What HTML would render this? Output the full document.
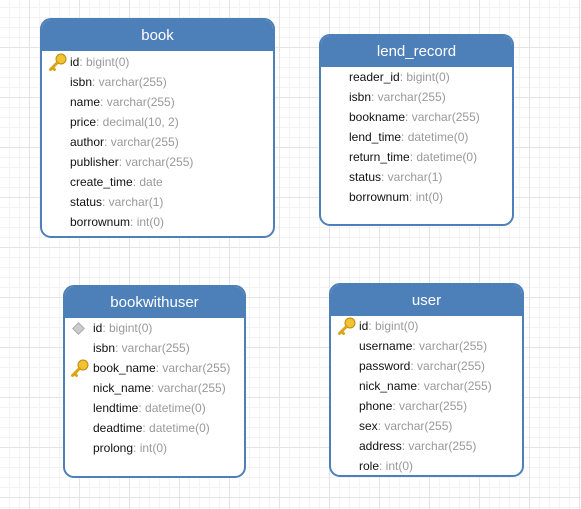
<!DOCTYPE html>
<html><head><style>
body{margin:0;width:581px;height:509px;overflow:hidden;background-color:#fff;
background-image:linear-gradient(#e4e4e4 1px,transparent 1px),linear-gradient(90deg,#e4e4e4 1px,transparent 1px),linear-gradient(#f3f3f3 1px,transparent 1px),linear-gradient(90deg,#f3f3f3 1px,transparent 1px);
background-size:50px 50px,50px 50px,10px 10px,10px 10px;background-position:0 -3px,-21px 0,0 -3px,-1px 0;
font-family:"Liberation Sans","Noto Sans CJK SC",sans-serif;position:relative}
.t{position:absolute;border:2px solid #4d7fb8;border-radius:11px;background:#fff;box-sizing:border-box;overflow:hidden}
.h{background:#4d80b9;color:#fff;font-size:15px;text-align:center;line-height:32px;height:31px}
.r{position:relative;height:20px;line-height:20px;font-size:12px;color:#111;white-space:nowrap}
.r span{color:#999}
.k{position:absolute;top:1px}
.d{position:absolute;top:6px;width:7px;height:7px;background:#ccc;border:1px solid #aaa;transform:rotate(45deg)}
</style></head><body>
<svg width="0" height="0" style="position:absolute"><defs><g id="key"><circle cx="13" cy="6" r="5" fill="#f2c230" stroke="#b98a10" stroke-width="1"/><path d="M9.5 9.5 L2.5 16.5 M4.5 14.5 L6.5 16.5" stroke="#d9a516" stroke-width="3" fill="none" stroke-linecap="round"/></g></defs></svg>
<div class="t" style="left:40px;top:18px;width:235px;height:220px">
<div class="h">book</div>
<div style="padding-left:28px;padding-top:1px">
<div class="r"><svg class="k" style="left:-22px" width="19" height="19"><use href="#key"/></svg>id<span>: bigint(0)</span></div>
<div class="r">isbn<span>: varchar(255)</span></div>
<div class="r">name<span>: varchar(255)</span></div>
<div class="r">price<span>: decimal(10, 2)</span></div>
<div class="r">author<span>: varchar(255)</span></div>
<div class="r">publisher<span>: varchar(255)</span></div>
<div class="r">create_time<span>: date</span></div>
<div class="r">status<span>: varchar(1)</span></div>
<div class="r">borrownum<span>: int(0)</span></div>
</div></div>
<div class="t" style="left:319px;top:34px;width:195px;height:192px">
<div class="h">lend_record</div>
<div style="padding-left:28px;padding-top:0px">
<div class="r">reader_id<span>: bigint(0)</span></div>
<div class="r">isbn<span>: varchar(255)</span></div>
<div class="r">bookname<span>: varchar(255)</span></div>
<div class="r">lend_time<span>: datetime(0)</span></div>
<div class="r">return_time<span>: datetime(0)</span></div>
<div class="r">status<span>: varchar(1)</span></div>
<div class="r">borrownum<span>: int(0)</span></div>
</div></div>
<div class="t" style="left:63px;top:285px;width:183px;height:193px">
<div class="h">bookwithuser</div>
<div style="padding-left:28px;padding-top:0px">
<div class="r"><div class="d" style="left:-19px"></div>id<span>: bigint(0)</span></div>
<div class="r">isbn<span>: varchar(255)</span></div>
<div class="r"><svg class="k" style="left:-23px" width="19" height="19"><use href="#key"/></svg>book_name<span>: varchar(255)</span></div>
<div class="r">nick_name<span>: varchar(255)</span></div>
<div class="r">lendtime<span>: datetime(0)</span></div>
<div class="r">deadtime<span>: datetime(0)</span></div>
<div class="r">prolong<span>: int(0)</span></div>
</div></div>
<div class="t" style="left:329px;top:283px;width:195px;height:194px">
<div class="h">user</div>
<div style="padding-left:28px;padding-top:0px">
<div class="r"><svg class="k" style="left:-22px" width="19" height="19"><use href="#key"/></svg>id<span>: bigint(0)</span></div>
<div class="r">username<span>: varchar(255)</span></div>
<div class="r">password<span>: varchar(255)</span></div>
<div class="r">nick_name<span>: varchar(255)</span></div>
<div class="r">phone<span>: varchar(255)</span></div>
<div class="r">sex<span>: varchar(255)</span></div>
<div class="r">address<span>: varchar(255)</span></div>
<div class="r">role<span>: int(0)</span></div>
</div></div>
</body></html>
